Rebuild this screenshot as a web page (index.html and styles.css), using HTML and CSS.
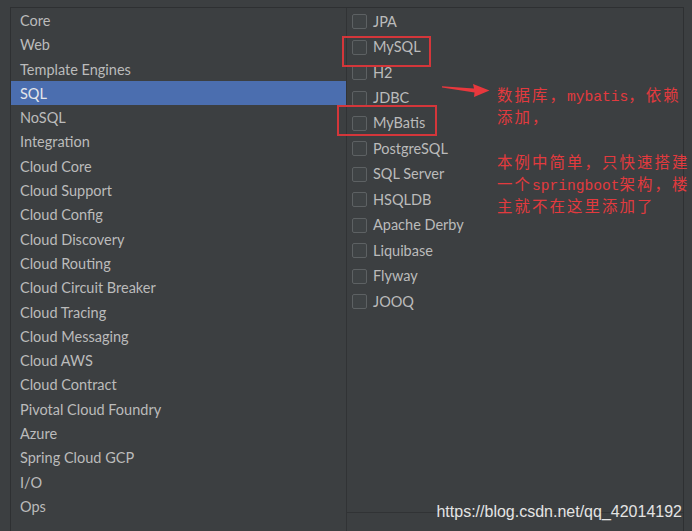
FILE: index.html
```html
<!DOCTYPE html>
<html lang="zh">
<head>
<meta charset="utf-8">
<title>Dependencies</title>
<link rel="stylesheet" href="styles.css">
</head>
<body>
<div class="frame">
  <div class="categories">
    <div class="cat">Core</div>
    <div class="cat">Web</div>
    <div class="cat">Template Engines</div>
    <div class="cat selected">SQL</div>
    <div class="cat">NoSQL</div>
    <div class="cat">Integration</div>
    <div class="cat">Cloud Core</div>
    <div class="cat">Cloud Support</div>
    <div class="cat">Cloud Config</div>
    <div class="cat">Cloud Discovery</div>
    <div class="cat">Cloud Routing</div>
    <div class="cat">Cloud Circuit Breaker</div>
    <div class="cat">Cloud Tracing</div>
    <div class="cat">Cloud Messaging</div>
    <div class="cat">Cloud AWS</div>
    <div class="cat">Cloud Contract</div>
    <div class="cat">Pivotal Cloud Foundry</div>
    <div class="cat">Azure</div>
    <div class="cat">Spring Cloud GCP</div>
    <div class="cat">I/O</div>
    <div class="cat">Ops</div>
  </div>
  <div class="divider"></div>
  <div class="deps">
    <div class="dep-list">
      <div class="dep"><span class="box"></span>JPA</div>
      <div class="dep"><span class="box"></span>MySQL</div>
      <div class="dep"><span class="box"></span>H2</div>
      <div class="dep"><span class="box"></span>JDBC</div>
      <div class="dep"><span class="box"></span>MyBatis</div>
      <div class="dep"><span class="box"></span>PostgreSQL</div>
      <div class="dep"><span class="box"></span>SQL Server</div>
      <div class="dep"><span class="box"></span>HSQLDB</div>
      <div class="dep"><span class="box"></span>Apache Derby</div>
      <div class="dep"><span class="box"></span>Liquibase</div>
      <div class="dep"><span class="box"></span>Flyway</div>
      <div class="dep"><span class="box"></span>JOOQ</div>
    </div>
    <div class="deps-foot"></div>
  </div>
</div>

<div class="mark mark-mysql"></div>
<div class="mark mark-mybatis"></div>

<svg class="arrow" width="52" height="18" viewBox="440 82 52 18" xmlns="http://www.w3.org/2000/svg">
  <polygon points="442,86.3 474,88.6 473,84 489.5,90.6 474,97 474.5,92.6 442,87.6" fill="#e8383d"/>
</svg>

<div class="note">
  <div class="line">数据库，<span class="lat">mybatis</span>，依赖</div>
  <div class="line">添加，</div>
  <div class="line"></div>
  <div class="line">本例中简单，只快速搭建</div>
  <div class="line">一个<span class="lat">springboot</span>架构，楼</div>
  <div class="line">主就不在这里添加了</div>
</div>

<div class="watermark">https://blog.csdn.net/qq_42014192</div>
</body>
</html>
```

FILE: styles.css
```css
html, body {
  margin: 0;
  padding: 0;
}

body {
  width: 692px;
  height: 531px;
  overflow: hidden;
  background: #3c3f41;
  position: relative;
  font-family: Lato, "Open Sans", sans-serif;
}

.frame {
  margin: 7px 0 0 10px;
  width: 674px;
  height: 524px;
  box-sizing: border-box;
  border: 1px solid #2e3032;
  border-bottom: none;
  display: grid;
  grid-template-columns: 335px 1px 1fr;
}

.categories {
  display: flex;
  flex-direction: column;
}

.cat {
  box-sizing: border-box;
  height: 24.3px;
  padding-top: 2px;
  line-height: 22.3px;
  padding-left: 9px;
  font-size: 14.5px;
  color: #bbbbbb;
  white-space: nowrap;
}

.cat.selected {
  background: #4b6eaf;
  color: #e4e6ea;
}

.divider {
  background: #313335;
}

.deps {
  display: flex;
  flex-direction: column;
}

.dep-list {
  flex: 1;
}

.dep {
  box-sizing: border-box;
  height: 25.45px;
  padding-top: 2px;
  display: flex;
  align-items: center;
  padding-left: 5px;
  font-size: 14.5px;
  line-height: 20px;
  color: #bbbbbb;
  white-space: nowrap;
}

.box {
  width: 13px;
  height: 13px;
  border: 1px solid #5d6163;
  border-radius: 2px;
  background: #3f4345;
  margin-right: 6px;
  flex: none;
}

.deps-foot {
  height: 18px;
  border-top: 1px solid #313335;
}

.mark {
  position: absolute;
  border: 2px solid #d4363a;
  box-sizing: border-box;
}

.mark-mysql {
  left: 342px;
  top: 36px;
  width: 89px;
  height: 31px;
}

.mark-mybatis {
  left: 337px;
  top: 105px;
  width: 100px;
  height: 31px;
}

.arrow {
  position: absolute;
  left: 440px;
  top: 82px;
}

.note {
  position: absolute;
  left: 497px;
  top: 83px;
  font-family: "Noto Sans CJK SC", sans-serif;
  font-size: 15.4px;
  letter-spacing: 2.1px;
  color: #e23a3e;
  white-space: nowrap;
}

.note .line {
  height: 22.3px;
  line-height: 22.3px;
}

.note .lat {
  font-family: "Liberation Mono", monospace;
  font-size: 14.6px;
  letter-spacing: 0;
  line-height: 1;
}

.watermark {
  position: absolute;
  right: 10px;
  top: 503px;
  font-family: "Liberation Sans", Arial, sans-serif;
  font-size: 16px;
  line-height: 18px;
  color: #e4e4e4;
  white-space: nowrap;
}
```
